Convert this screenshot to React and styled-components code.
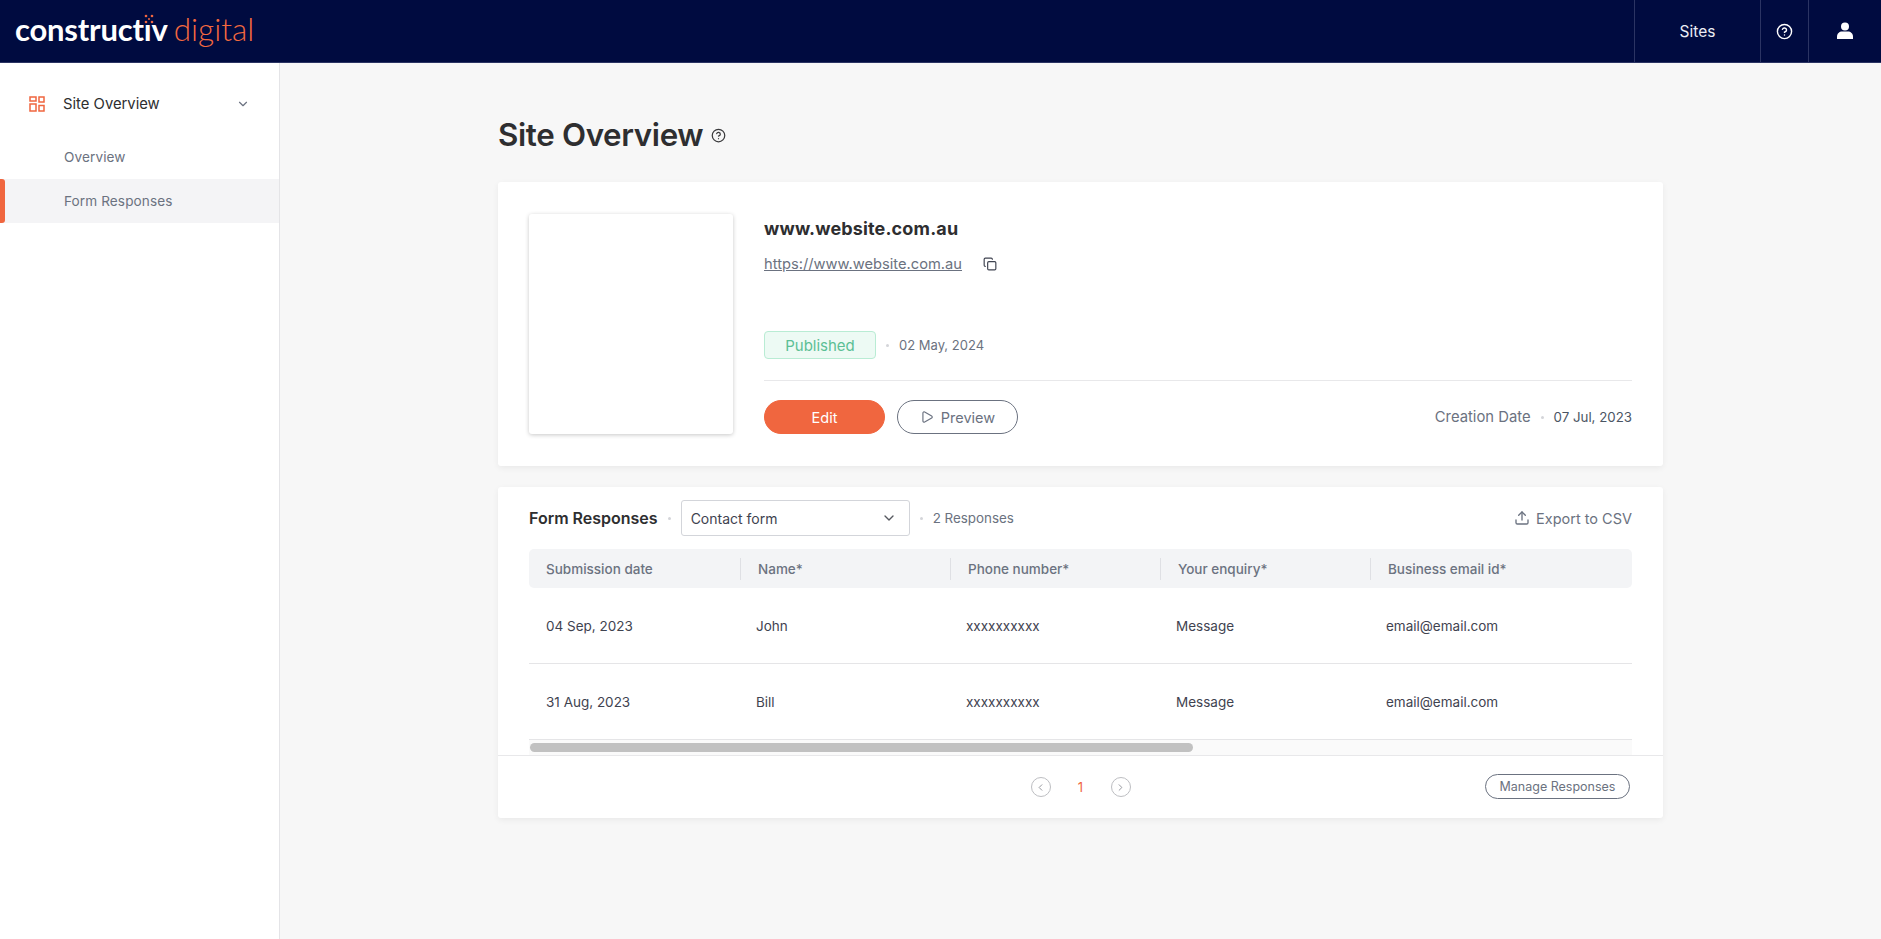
import React from 'react';
import styled, { createGlobalStyle } from 'styled-components';
import { ChevronDown, ChevronLeft, ChevronRight, CircleHelp, Copy, Play, Upload } from 'lucide-react';

const GlobalStyle = createGlobalStyle`
  html, body {
    margin: 0;
    padding: 0;
    height: 100%;
    background: #f7f7f7;
    font-family: Inter, "Liberation Sans", sans-serif;
    color: #2e2e30;
  }
  * { box-sizing: border-box; }
`;

const Page = styled.div`
  display: flex;
  flex-direction: column;
  height: 939px;
  overflow: hidden;
`;

const Header = styled.header`
  flex: 0 0 63px;
  display: flex;
  justify-content: space-between;
  background: #000b40;
  border-bottom: 1px solid #2b3463;
`;

const Logo = styled.div`
  position: relative;
  display: flex;
  align-items: baseline;
  gap: 6px;
  padding: 9px 0 0 15px;
  font-family: Lato, sans-serif;
  line-height: 40px;
`;

const LogoMain = styled.span`
  color: #fff;
  font-size: 31px;
  font-weight: 700;
  letter-spacing: -0.2px;
`;

const LogoAccent = styled.span`
  color: #f4693f;
  font-size: 31.5px;
  font-weight: 300;
`;

const LogoSpark = styled.svg`
  position: absolute;
  left: 143px;
  top: 13px;
  width: 12px;
  height: 12px;
`;

const HeaderNav = styled.nav`
  display: flex;
`;

const HeaderCell = styled.div`
  width: ${p => p.$width}px;
  display: flex;
  align-items: center;
  justify-content: center;
  border-left: 1px solid #2b3463;
  color: #eceef5;
  font-size: 15.5px;
`;

const Body = styled.div`
  flex: 1;
  display: flex;
  min-height: 0;
`;

const Sidebar = styled.aside`
  flex: 0 0 280px;
  background: #fff;
  border-right: 1px solid #e4e4e7;
  padding-top: 21px;
`;

const SideGroup = styled.div`
  display: flex;
  align-items: center;
  height: 40px;
  padding: 0 29px;
  gap: 18px;
  font-size: 14.8px;
  color: #2e2e30;
`;

const SideGroupLabel = styled.span`
  flex: 1;
`;

const SideItem = styled.div`
  position: relative;
  display: flex;
  align-items: center;
  height: 44px;
  padding-left: 64px;
  font-size: 13.6px;
  letter-spacing: 0.1px;
  color: #6b7280;
  background: ${p => (p.$active ? '#f4f4f6' : 'transparent')};

  ${p => p.$active && `
    &::before {
      content: '';
      position: absolute;
      left: 0;
      top: 0;
      bottom: 0;
      width: 5px;
      background: #f0663f;
      border-radius: 0 3px 3px 0;
    }
  `}
`;

const SideList = styled.div`
  margin-top: 11px;
`;

const Main = styled.main`
  flex: 1;
  min-width: 0;
  padding: 52px 218px 0;
`;

const TitleRow = styled.div`
  display: flex;
  align-items: center;
  gap: 8px;
  height: 40px;
  margin-bottom: 27px;
  color: #3a3a3c;
`;

const Title = styled.h1`
  margin: 0;
  font-size: 31.3px;
  font-weight: 600;
  letter-spacing: -0.35px;
  color: #2e2e30;
`;

const Card = styled.section`
  background: #fff;
  border-radius: 3px;
  box-shadow: 0 2px 6px rgba(0, 0, 0, 0.06);
`;

const SiteCard = styled(Card)`
  display: flex;
  height: 284px;
  padding: 32px 31px;
  gap: 31px;
  margin-bottom: 21px;
`;

const Thumb = styled.div`
  flex: 0 0 204px;
  height: 220px;
  background: #fff;
  border-radius: 3px;
  box-shadow: 0 1px 4px rgba(0, 0, 0, 0.22);
`;

const SiteInfo = styled.div`
  flex: 1;
  display: flex;
  flex-direction: column;
  padding-top: 1px;
`;

const SiteName = styled.div`
  font-size: 18px;
  font-weight: 700;
  line-height: 28px;
  letter-spacing: 0.15px;
  color: #2e2e30;
`;

const LinkRow = styled.div`
  display: flex;
  align-items: center;
  gap: 21px;
  margin-top: 8px;
  height: 28px;
  color: #3f4350;
`;

const SiteLink = styled.a`
  font-size: 14.7px;
  color: #6b7280;
  text-decoration: underline;
`;

const StatusRow = styled.div`
  display: flex;
  align-items: center;
  margin-top: 54px;
  height: 28px;
`;

const Badge = styled.span`
  width: 112px;
  height: 28px;
  display: flex;
  align-items: center;
  justify-content: center;
  background: #edfaf4;
  border: 1px solid #b9ecd4;
  border-radius: 4px;
  color: #5cbf95;
  font-size: 15px;
`;

const Dot = styled.i`
  width: 3px;
  height: 3px;
  margin: 0 ${p => p.$gap || 10}px;
  background: #d4d5d9;
  border-radius: 50%;
`;

const MutedDate = styled.span`
  font-size: 13px;
  color: #6b7280;
`;

const Divider = styled.hr`
  width: 100%;
  margin: 21px 0 19px;
  border: 0;
  border-top: 1px solid #e8e8ea;
`;

const ActionRow = styled.div`
  display: flex;
  align-items: center;
  gap: 12px;
`;

const Button = styled.button`
  width: 121px;
  height: 34px;
  display: flex;
  align-items: center;
  justify-content: center;
  gap: 7px;
  border-radius: 17px;
  border: 1px solid ${p => (p.$primary ? '#f0663f' : '#6b7280')};
  background: ${p => (p.$primary ? '#f0663f' : '#fff')};
  color: ${p => (p.$primary ? '#fff' : '#6b7280')};
  font-family: inherit;
  font-size: 14.5px;
`;

const CreationDate = styled.div`
  margin-left: auto;
  display: flex;
  align-items: center;
  font-size: 14.8px;
  color: #6b7280;
`;

const DateValue = styled.span`
  font-size: 13.3px;
  color: #4b5563;
`;

const ToolBar = styled.div`
  display: flex;
  align-items: center;
  height: 62px;
  padding: 0 31px;
`;

const SectionTitle = styled.h2`
  margin: 0;
  font-size: 16px;
  font-weight: 600;
  color: #2e2e30;
`;

const Select = styled.div`
  width: 229px;
  height: 36px;
  display: flex;
  align-items: center;
  justify-content: space-between;
  padding: 0 12px 0 9px;
  border: 1px solid #d3d5da;
  border-radius: 3px;
  font-size: 14px;
  color: #3f4350;
`;

const ResponseCount = styled.span`
  font-size: 13.4px;
  color: #6b7280;
`;

const Export = styled.div`
  margin-left: auto;
  display: flex;
  align-items: center;
  gap: 6px;
  font-size: 14.5px;
  color: #6b7280;
`;

const TableWrap = styled.div`
  margin: 0 31px;
  overflow: hidden;
`;

const HeadRow = styled.div`
  display: flex;
  align-items: center;
  height: 39px;
  background: #f3f4f6;
  border-radius: 5px;
`;

const HeadCell = styled.div`
  flex: 0 0 210px;
  padding-left: 17px;
  border-left: 1px solid #dfe0e4;
  line-height: 22px;
  font-size: 13.5px;
  font-weight: 500;
  color: #6b7280;
  white-space: nowrap;

  &:first-child {
    flex-basis: 211px;
    border-left: 0;
  }
`;

const DataRow = styled.div`
  display: flex;
  align-items: center;
  height: 76px;
  border-bottom: 1px solid #e5e5e7;
`;

const DataCell = styled.div`
  flex: 0 0 210px;
  padding-left: 16px;
  font-size: 13.5px;
  color: #3f4350;
  white-space: nowrap;

  &:first-child {
    flex-basis: 211px;
    padding-left: 17px;
  }
`;

const ScrollTrack = styled.div`
  height: 15px;
  margin: 0 31px;
  padding: 3px 1px;
  background: #fafafa;
`;

const ScrollThumb = styled.div`
  height: 9px;
  background: #c1c1c1;
  border-radius: 5px;
`;

const Footer = styled.div`
  position: relative;
  display: flex;
  align-items: center;
  justify-content: center;
  height: 63px;
  border-top: 1px solid #e8e8ea;
`;

const Pager = styled.div`
  display: flex;
  align-items: center;
  gap: 25px;
`;

const PageArrow = styled.span`
  width: 20px;
  height: 20px;
  display: flex;
  align-items: center;
  justify-content: center;
  border: 1px solid #bdbec2;
  border-radius: 50%;
  color: #8d8f96;
`;

const PageNumber = styled.span`
  width: 10px;
  text-align: center;
  font-size: 13px;
  color: #f0663f;
`;

const ManageButton = styled.button`
  position: absolute;
  right: 33px;
  top: 18px;
  width: 145px;
  height: 25px;
  border: 1px solid #6b7280;
  border-radius: 13px;
  background: #fff;
  color: #6b7280;
  font-family: inherit;
  font-size: 12.5px;
`;

const GridIcon = () => (
  <svg width="16" height="16" viewBox="0 0 16 16" fill="none" stroke="#f0663f" strokeWidth="1.5">
    <rect x="1" y="1" width="6" height="4" />
    <rect x="10" y="1" width="5" height="5" />
    <rect x="1" y="8" width="6" height="7" />
    <rect x="10" y="9.500" width="5" height="5.500" />
  </svg>
);

const UserIcon = () => (
  <svg width="18" height="18" viewBox="0 0 18 18" fill="#fff">
    <circle cx="9" cy="4.500" r="4" />
    <path d="M1 17v-2.500C1 11.500 3.500 9.500 6 9.500h6c2.500 0 5 2 5 5V17z" />
  </svg>
);

const headers = ['Submission date', 'Name*', 'Phone number*', 'Your enquiry*', 'Business email id*'];

const responses = [
  { date: '04 Sep, 2023', name: 'John', phone: 'xxxxxxxxxx', enquiry: 'Message', email: 'email@email.com' },
  { date: '31 Aug, 2023', name: 'Bill', phone: 'xxxxxxxxxx', enquiry: 'Message', email: 'email@email.com' },
];

const App = () => (
  <Page>
    <GlobalStyle />
    <Header>
      <Logo>
        <LogoMain>constructiv</LogoMain>
        <LogoAccent>digital</LogoAccent>
        <LogoSpark viewBox="0 0 12 12">
          <circle cx="6" cy="6" r="6" fill="#000b40" />
          <g fill="#f0663f">
            <circle cx="3" cy="3" r="1.300" />
            <circle cx="9" cy="3" r="1.300" />
            <circle cx="3" cy="9" r="1.300" />
            <circle cx="9" cy="9" r="1.300" />
            <circle cx="6" cy="6" r="1" />
          </g>
        </LogoSpark>
      </Logo>
      <HeaderNav>
        <HeaderCell $width={126}>Sites</HeaderCell>
        <HeaderCell $width={48}>
          <CircleHelp size={17} color="#fff" />
        </HeaderCell>
        <HeaderCell $width={73}>
          <UserIcon />
        </HeaderCell>
      </HeaderNav>
    </Header>
    <Body>
      <Sidebar>
        <SideGroup>
          <GridIcon />
          <SideGroupLabel>Site Overview</SideGroupLabel>
          <ChevronDown size={14} color="#6b7280" />
        </SideGroup>
        <SideList>
          <SideItem>Overview</SideItem>
          <SideItem $active>Form Responses</SideItem>
        </SideList>
      </Sidebar>
      <Main>
        <TitleRow>
          <Title>Site Overview</Title>
          <CircleHelp size={15} />
        </TitleRow>
        <SiteCard>
          <Thumb />
          <SiteInfo>
            <SiteName>www.website.com.au</SiteName>
            <LinkRow>
              <SiteLink>https://www.website.com.au</SiteLink>
              <Copy size={14} />
            </LinkRow>
            <StatusRow>
              <Badge>Published</Badge>
              <Dot />
              <MutedDate>02 May, 2024</MutedDate>
            </StatusRow>
            <Divider />
            <ActionRow>
              <Button $primary>Edit</Button>
              <Button>
                <Play size={14} />
                Preview
              </Button>
              <CreationDate>
                Creation Date
                <Dot />
                <DateValue>07 Jul, 2023</DateValue>
              </CreationDate>
            </ActionRow>
          </SiteInfo>
        </SiteCard>
        <Card>
          <ToolBar>
            <SectionTitle>Form Responses</SectionTitle>
            <Dot />
            <Select>
              Contact form
              <ChevronDown size={16} color="#55585f" />
            </Select>
            <Dot />
            <ResponseCount>2 Responses</ResponseCount>
            <Export>
              <Upload size={16} />
              Export to CSV
            </Export>
          </ToolBar>
          <TableWrap>
            <HeadRow>
              {headers.map(h => (
                <HeadCell key={h}>{h}</HeadCell>
              ))}
            </HeadRow>
            {responses.map(r => (
              <DataRow key={r.date}>
                <DataCell>{r.date}</DataCell>
                <DataCell>{r.name}</DataCell>
                <DataCell>{r.phone}</DataCell>
                <DataCell>{r.enquiry}</DataCell>
                <DataCell>{r.email}</DataCell>
              </DataRow>
            ))}
          </TableWrap>
          <ScrollTrack>
            <ScrollThumb style={{ width: '60.2%' }} />
          </ScrollTrack>
          <Footer>
            <Pager>
              <PageArrow>
                <ChevronLeft size={11} />
              </PageArrow>
              <PageNumber>1</PageNumber>
              <PageArrow>
                <ChevronRight size={11} />
              </PageArrow>
            </Pager>
            <ManageButton>Manage Responses</ManageButton>
          </Footer>
        </Card>
      </Main>
    </Body>
  </Page>
);

export default App;
